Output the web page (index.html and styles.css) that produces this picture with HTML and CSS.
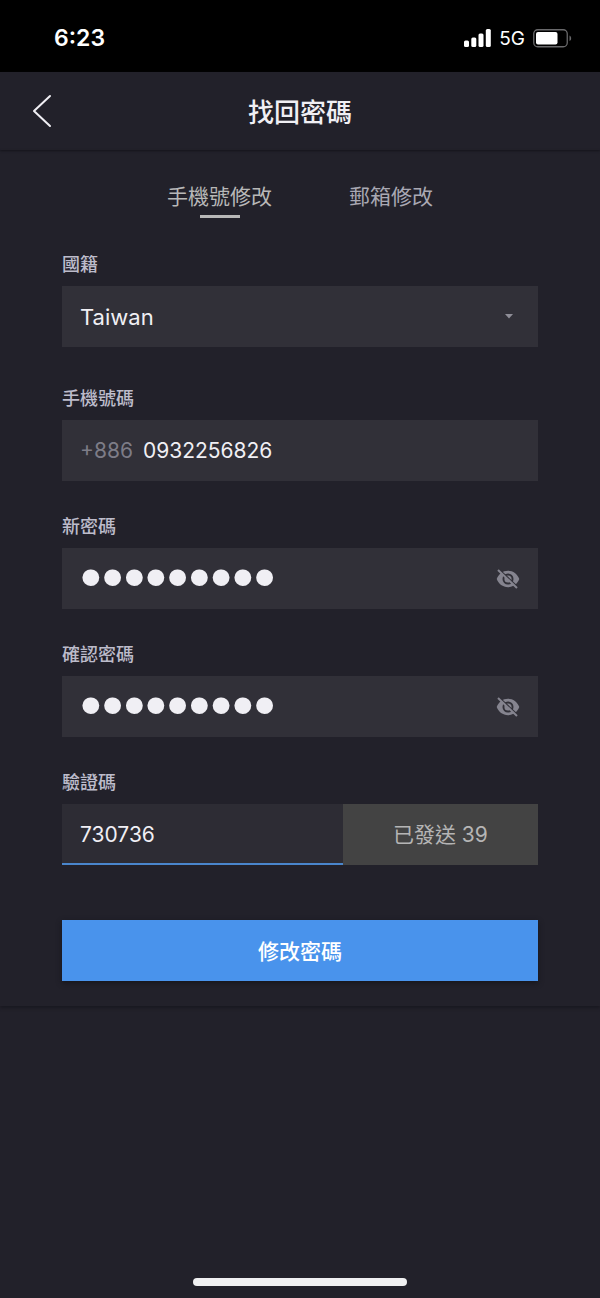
FILE: index.html
```html
<!DOCTYPE html>
<html lang="zh-Hant">
<head>
<meta charset="utf-8">
<meta name="viewport" content="width=device-width, initial-scale=1">
<title>找回密碼</title>
<link rel="stylesheet" href="styles.css">
</head>
<body>
<div class="status-bar">
  <span class="clock">6:23</span>
  <div class="indicators">
    <svg class="signal" viewBox="0 0 27 18" fill="#fff" aria-hidden="true">
      <rect x="0" y="11.500" width="5" height="6.500" rx="1.5"/><rect x="7.300" y="8.500" width="5" height="9.500" rx="1.5"/><rect x="14.500" y="4.500" width="5" height="13.500" rx="1.5"/><rect x="21.800" y="0" width="5" height="18" rx="1.5"/>
    </svg>
    <span class="network">5G</span>
    <svg class="battery" viewBox="0 0 39 19" aria-hidden="true">
      <rect x="0.75" y="0.75" width="33.5" height="17" rx="4" fill="none" stroke="#69696b" stroke-width="1.3"/>
      <rect x="3" y="3" width="21.5" height="12.5" rx="2" fill="#fff"/>
      <path d="M36.5 6.5c2.2 1 2.2 4.600 0 5.600z" fill="#69696b"/>
    </svg>
  </div>
</div>
<header class="header">
  <button class="back" type="button" aria-label="返回">
    <svg viewBox="0 0 20 34" aria-hidden="true"><path d="M18 2 2 17 18 32" fill="none" stroke="#f0eff4" stroke-width="2" stroke-linecap="round" stroke-linejoin="round"/></svg>
  </button>
  <h1 class="title">找回密碼</h1>
</header>
<main class="card">
  <nav class="tabs">
    <button class="tab tab-active" type="button">手機號修改</button>
    <button class="tab" type="button">郵箱修改</button>
  </nav>
  <form class="form">
    <div class="field field-country">
      <label class="label" for="country">國籍</label>
      <div class="control">
        <select class="input select" id="country"><option>Taiwan</option></select>
        <svg class="caret" viewBox="0 0 8 5" aria-hidden="true"><path d="M0 0h8L4 4.500z" fill="#8f8e98"/></svg>
      </div>
    </div>
    <div class="field">
      <label class="label" for="phone">手機號碼</label>
      <div class="control">
        <span class="prefix">+886</span>
        <input class="input" id="phone" type="tel" value="0932256826">
      </div>
    </div>
    <div class="field">
      <label class="label" for="password">新密碼</label>
      <div class="control">
        <input class="input password" id="password" type="password" value="abcdefghi">
        <button class="eye" type="button" aria-label="顯示密碼">
          <svg viewBox="0 0 24 20" aria-hidden="true"><path fill="#85848f" fill-rule="evenodd" d="M12 1.800C6.800 1.800 2.500 5.200.7 10c1.800 4.800 6.100 8.200 11.300 8.200s9.500-3.400 11.300-8.200C21.500 5.200 17.200 1.800 12 1.800zm0 2.700a5.500 5.500 0 1 1 0 11 5.500 5.500 0 0 1 0-11zm0 1.900a3.600 3.600 0 1 0 0 7.200 3.600 3.600 0 0 0 0-7.200z"/><path d="M3.400.7 22.200 18.300" stroke="#313038" stroke-width="1.5"/><path d="M2 1 21 19" stroke="#85848f" stroke-width="2"/></svg>
        </button>
      </div>
    </div>
    <div class="field">
      <label class="label" for="confirm">確認密碼</label>
      <div class="control">
        <input class="input password" id="confirm" type="password" value="abcdefghi">
        <button class="eye" type="button" aria-label="顯示密碼">
          <svg viewBox="0 0 24 20" aria-hidden="true"><path fill="#85848f" fill-rule="evenodd" d="M12 1.800C6.800 1.800 2.500 5.200.7 10c1.800 4.800 6.100 8.200 11.300 8.200s9.500-3.400 11.300-8.200C21.500 5.200 17.200 1.800 12 1.800zm0 2.700a5.500 5.500 0 1 1 0 11 5.500 5.500 0 0 1 0-11zm0 1.900a3.600 3.600 0 1 0 0 7.200 3.600 3.600 0 0 0 0-7.200z"/><path d="M3.400.7 22.200 18.300" stroke="#313038" stroke-width="1.5"/><path d="M2 1 21 19" stroke="#85848f" stroke-width="2"/></svg>
        </button>
      </div>
    </div>
    <div class="field">
      <label class="label" for="code">驗證碼</label>
      <div class="code-row">
        <div class="control control-focus">
          <input class="input" id="code" type="text" inputmode="numeric" value="730736">
        </div>
        <button class="send" type="button">已發送 39</button>
      </div>
    </div>
    <button class="submit" type="submit">修改密碼</button>
  </form>
</main>
<footer class="home"><div class="home-bar"></div></footer>
</body>
</html>
```
FILE: styles.css
```css
* { box-sizing: border-box; }
body {
  margin: 0;
  min-height: 100vh;
  display: flex;
  flex-direction: column;
  background: #22212a;
  color: #f0eff4;
  font-family: Inter, "Noto Sans CJK TC", sans-serif;
}
button, input, select { font: inherit; color: inherit; border: 0; padding: 0; background: none; border-radius: 0; outline: 0; }
svg { display: block; }
.status-bar {
  height: 72px;
  padding: 4px 28px 0 54px;
  display: flex;
  align-items: center;
  justify-content: space-between;
  background: #000;
  color: #fff;
}
.clock { font-size: 23px; font-weight: 600; }
.indicators { display: flex; align-items: center; gap: 8px; }
.signal { width: 27px; height: 18px; }
.network { font-size: 19px; }
.battery { width: 39px; height: 19px; }
.header {
  height: 78px;
  display: grid;
  grid-template-columns: 84px 1fr 84px;
  align-items: center;
  box-shadow: 0 1px 2px #15141b;
}
.back { justify-self: center; }
.back svg { width: 20px; height: 34px; }
.title { margin: 0; padding-top: 4px; text-align: center; font-size: 26px; font-weight: 500; line-height: 40px; }
.card { padding: 30px 62px 25px; box-shadow: 0 2px 3px #191820; }
.tabs { display: flex; justify-content: center; gap: 77px; }
.tab {
  height: 38px;
  display: flex;
  flex-direction: column;
  align-items: center;
  font-size: 21px;
  line-height: 34px;
  color: #a9a8b3;
}
.tab-active { color: #b8b8b8; }
.tab-active::after { content: ""; width: 40px; height: 3px; margin-top: 1px; background: #b8b8b8; }
.form { padding-top: 32px; }
.field { margin-bottom: 31px; }
.field-country { margin-bottom: 37px; }
.label { display: block; height: 36px; font-size: 18px; font-weight: 500; line-height: 30px; color: #bdbccb; }
.control {
  height: 61px;
  padding: 0 18px;
  display: flex;
  align-items: center;
  gap: 10px;
  background: #313038;
  font-size: 21px;
}
.code-row .control { flex: 1; }
.input { flex: 1; min-width: 0; width: 100%; height: 60px; }
.select { appearance: none; font-size: 22px; }
.caret { width: 8px; height: 5px; margin-right: 7px; }
.prefix { color: #7d7c87; }
.password { padding-bottom: 4px; font-family: "Liberation Sans", sans-serif; font-size: 62px; line-height: 56px; }
.eye svg { width: 24px; height: 20px; }
.code-row { display: flex; }
.control-focus { background: #2d2c34; box-shadow: inset 0 -2px #4a86cc; }
.send {
  width: 41%;
  padding-bottom: 4px;
  background: #434343;
  color: #b5b5b5;
  font-size: 21px;
}
.submit {
  width: 100%;
  height: 61px;
  margin-top: 24px;
  padding-bottom: 2px;
  background: #4993ec;
  color: #fff;
  font-size: 21px;
  font-weight: 500;
  box-shadow: 0 2px 5px #16151c;
}
.home { margin-top: auto; padding-bottom: 12px; display: flex; justify-content: center; }
.home-bar { width: 214px; height: 8px; border-radius: 4px; background: #f0f0f1; }
```
